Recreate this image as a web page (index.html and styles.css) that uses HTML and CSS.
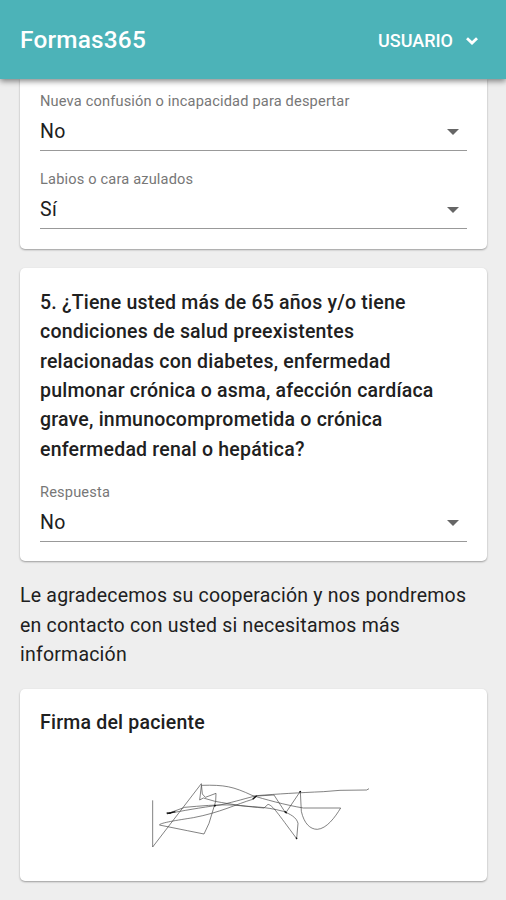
FILE: index.html
```html
<!DOCTYPE html>
<html lang="es">
<head>
<meta charset="utf-8">
<title>Formas365</title>
<link rel="stylesheet" href="styles.css">
</head>
<body>
<header class="bar">
  <h1 class="brand">Formas365</h1>
  <button class="user">USUARIO
    <svg class="chevron" viewBox="0 0 14 10"><path d="M2 2.2 L7 7 L12 2.2"/></svg>
  </button>
</header>
<main class="content">
  <section class="card card-continued">
    <div class="field">
      <div class="label">Nueva confusión o incapacidad para despertar</div>
      <div class="select"><span>No</span><i class="caret"></i></div>
    </div>
    <div class="field">
      <div class="label">Labios o cara azulados</div>
      <div class="select"><span>Sí</span><i class="caret"></i></div>
    </div>
  </section>
  <section class="card card-question">
    <h2 class="question">5. ¿Tiene usted más de 65 años y/o tiene<br>condiciones de salud preexistentes<br>relacionadas con diabetes, enfermedad<br>pulmonar crónica o asma, afección cardíaca<br>grave, inmunocomprometida o crónica<br>enfermedad renal o hepática?</h2>
    <div class="field">
      <div class="label">Respuesta</div>
      <div class="select"><span>No</span><i class="caret"></i></div>
    </div>
  </section>
  <p class="thanks">Le agradecemos su cooperación y nos pondremos<br>en contacto con usted si necesitamos más<br>información</p>
  <section class="card card-signature">
    <h2 class="question">Firma del paciente</h2>
    <svg class="signature" viewBox="0 0 720 270">
      <path d="M38 91 V231 L184 41 L187 72 L196 82 L228 70 L227 94 L207 160 L192 192 L142 182 L58 165 C62 158 110 151 160 143 C240 128 290 102 338 88 L350 78 L402 75 L437 129 L481 64 L484 124 C492 160 510 178 532 178 C560 176 585 142 602 114 H490 C440 106 370 87 336 76 C280 50 255 44 184 46"/>
      <path d="M184 48 L179 90 L190 84 L225 94 C280 104 320 110 372 114 L384 103 C398 106 412 128 470 206 L474 160 C470 142 450 132 430 124 C370 108 340 112 280 105 C230 103 180 108 134 112 L82 131 C130 122 180 113 240 105 C290 94 320 84 350 77 C410 72 480 68 550 65 L600 61 L680 60 L687 56"/>
      <path d="M82 131 L106 125 M80 129 L92 130 M222 108 L228 106 M338 88 L350 77 M434 124 L440 130 M478 66 L483 64 M468 203 L471 207" class="pressure"/>
    </svg>
  </section>
</main>
</body>
</html>
```

FILE: styles.css
```css
* { box-sizing: border-box; }

body {
  margin: 0;
  height: 900px;
  overflow: hidden;
  background: #eee;
  color: #202020;
  font-family: Roboto, "Liberation Sans", sans-serif;
  font-size: 19.5px;
  line-height: 29.35px;
  letter-spacing: 0.21px;
}

.bar {
  position: relative;
  z-index: 1;
  display: flex;
  align-items: center;
  justify-content: space-between;
  height: 79px;
  padding: 1px 27px 0 20px;
  background: #4cb3b8;
  color: #fff;
  box-shadow: 0 2px 6px rgba(0, 0, 0, 0.5);
}

.brand {
  margin: 0;
  font-size: 24.4px;
  font-weight: 500;
  letter-spacing: 0.2px;
}

.user {
  display: flex;
  align-items: center;
  gap: 12px;
  padding: 1px 0 0;
  border: 0;
  background: none;
  color: inherit;
  font: 500 18px Roboto, sans-serif;
  letter-spacing: 0;
}

.chevron {
  width: 14px;
  height: 10px;
  fill: none;
  stroke: currentColor;
  stroke-width: 2.8;
}

.content { padding: 0 19px 0 20px; }

.card {
  padding: 0 20px;
  border-radius: 5px;
  background: #fff;
  box-shadow: 0 1px 2px rgba(0, 0, 0, 0.35);
}

.card-continued {
  height: 169.5px;
  padding-top: 12px;
  border-radius: 0 0 5px 5px;
}

.card-question {
  height: 293px;
  margin-top: 19.5px;
  padding-top: 20px;
}

.card-signature {
  height: 192px;
  padding-top: 19.5px;
}

.field {
  height: 60px;
  border-bottom: 1px solid #999;
}

.field + .field { margin-top: 18px; }
.question + .field { margin-top: 18px; }

.label {
  height: 20px;
  color: #777;
  font-size: 14.6px;
  line-height: 20px;
  letter-spacing: 0.17px;
}

.select {
  display: flex;
  align-items: center;
  justify-content: space-between;
  height: 40px;
  padding: 2px 8px 0 0;
  letter-spacing: 0.4px;
}

.caret {
  border: 6px solid transparent;
  border-top-color: #666;
  border-bottom: 0;
}

.question {
  margin: 0;
  font-size: inherit;
  font-weight: 500;
}

.thanks { margin: 20.4px 0 19.5px; }

.signature {
  display: block;
  width: 240px;
  height: 90px;
  margin: 32.5px 0 0 100px;
  fill: none;
  stroke: #444;
  stroke-width: 2;
}

.pressure {
  stroke: #111;
  stroke-width: 4;
}
```
